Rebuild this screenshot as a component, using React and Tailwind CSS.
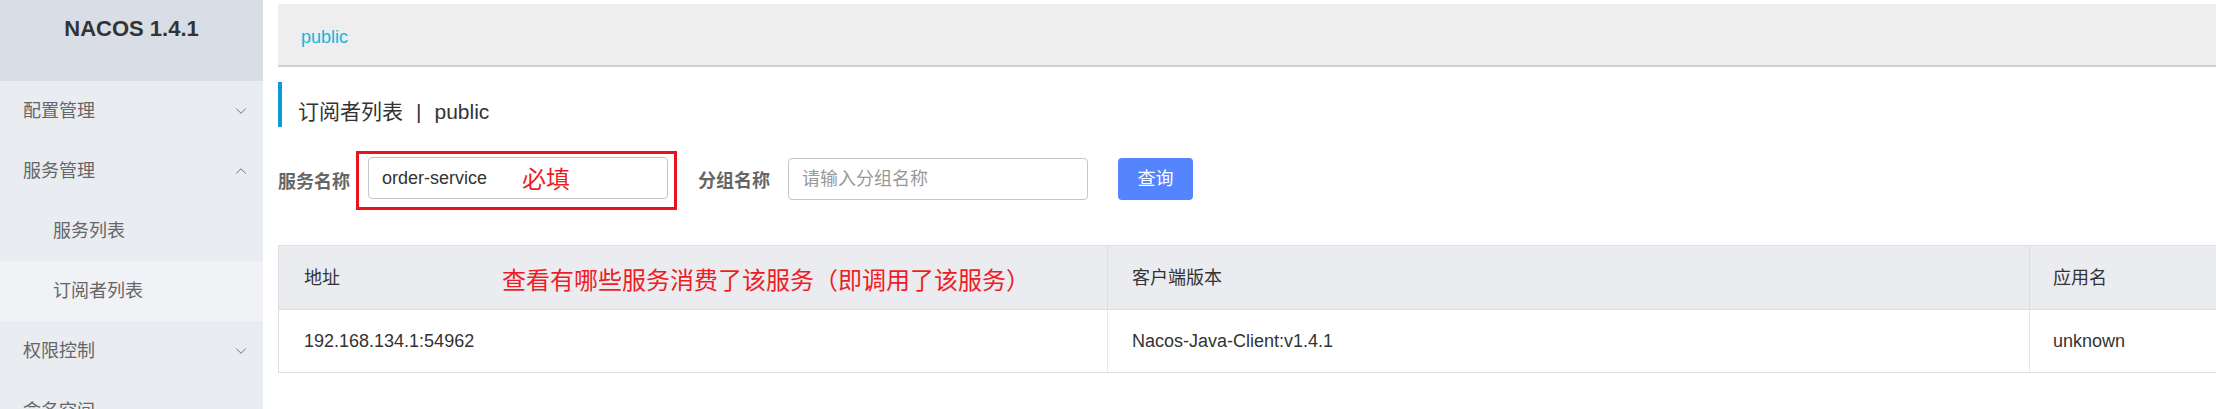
import { ChevronDown, ChevronUp } from 'lucide-react'

const font = { fontFamily: '"Liberation Sans", "Noto Sans CJK SC", sans-serif' }

function MenuItem({ label, sub, open, active, arrow }) {
  return (
    <div
      className={`h-[60px] shrink-0 flex items-center justify-between pr-[13px] text-[18px] text-[#666] ${sub ? 'pl-[53px]' : 'pl-[23px]'} ${active ? 'bg-[#f0f2f6]' : 'bg-[#e9ecf1]'}`}
    >
      <span className="leading-[20px]">{label}</span>
      {arrow && (open ? <ChevronUp className="size-[18px] text-[#666]" strokeWidth={1.2} /> : <ChevronDown className="size-[18px] text-[#666]" strokeWidth={1.2} />)}
    </div>
  )
}

export default function App() {
  return (
    <div className="flex w-full h-[409px] overflow-hidden bg-white" style={font}>
      <aside className="w-[263px] shrink-0 bg-[#e9ecf1] flex flex-col overflow-hidden">
        <div className="h-[81px] shrink-0 bg-[#d9dee6] pt-[18px] text-center text-[22px] leading-[22px] font-bold text-[#333]">
          NACOS 1.4.1
        </div>
        <MenuItem label="配置管理" arrow />
        <MenuItem label="服务管理" arrow open />
        <MenuItem label="服务列表" sub />
        <MenuItem label="订阅者列表" sub active />
        <MenuItem label="权限控制" arrow />
        <MenuItem label="命名空间" />
      </aside>

      <main className="flex-1 min-w-0 pl-[15px] pt-[4px]">
        <div className="h-[63px] bg-[#eeeeee] border-b-2 border-[#d0d0d0] flex items-center pl-[23px] pt-[4px]">
          <span className="text-[18px] leading-[20px] text-[#11b7dd]">public</span>
        </div>

        <div className="flex items-start mt-[15px]">
          <div className="w-[4px] h-[45px] bg-[#0f9ad3]" />
          <div className="pl-[16px] pt-[20px] text-[21px] leading-[20px] text-[#333] flex">
            <span>订阅者列表</span>
            <span className="mx-[13px]">|</span>
            <span>public</span>
          </div>
        </div>

        <div className="flex items-center mt-[24px] h-[59px]">
          <span className="text-[18px] font-bold text-[#666] w-[78px] leading-[20px] pt-[2px]">服务名称</span>
          <div className="h-[59px] w-[321px] border-[3px] border-[#e8141d] pl-[9px] pt-[3px]">
            <div className="w-[300px] h-[42px] border border-[#c4c6cf] rounded-[4px] flex items-center pl-[13px] bg-white">
              <span className="text-[18px] leading-[20px] text-[#333]">order-service</span>
              <span className="ml-[35px] text-[24px] leading-[24px] text-[#ee1c25] pt-[4px]">必填</span>
            </div>
          </div>
          <span className="ml-[21px] text-[18px] font-bold text-[#666] w-[90px] leading-[20px]">分组名称</span>
          <div className="w-[300px] h-[42px] border border-[#c4c6cf] rounded-[4px] flex items-center pl-[13px] -mt-[4px]">
            <span className="text-[18px] leading-[20px] text-[#999]">请输入分组名称</span>
          </div>
          <button className="ml-[30px] w-[75px] h-[42px] -mt-[4px] bg-[#5584ff] rounded-[4px] text-white text-[18px] leading-[20px]">
            查询
          </button>
        </div>

        <div className="mt-[35px] border-t border-l border-[#dcdee3] text-[18px] text-[#333]">
          <div className="flex h-[64px] bg-[#ebecf0] border-b border-[#dcdee3]">
            <div className="w-[829px] shrink-0 flex items-center pl-[25px] border-r border-[#dcdee3]">
              <span className="leading-[20px]">地址</span>
              <span className="ml-[162px] text-[24px] leading-[24px] text-[#ee1c25] pt-[6px]">查看有哪些服务消费了该服务（即调用了该服务）</span>
            </div>
            <div className="w-[922px] shrink-0 flex items-center pl-[24px] border-r border-[#dcdee3]">
              <span className="leading-[20px]">客户端版本</span>
            </div>
            <div className="flex-1 flex items-center pl-[23px]">
              <span className="leading-[20px]">应用名</span>
            </div>
          </div>
          <div className="flex h-[63px] border-b border-[#dcdee3]">
            <div className="w-[829px] shrink-0 flex items-center pl-[25px] border-r border-[#e6e7eb]">
              <span className="leading-[20px]">192.168.134.1:54962</span>
            </div>
            <div className="w-[922px] shrink-0 flex items-center pl-[24px] border-r border-[#e6e7eb]">
              <span className="leading-[20px]">Nacos-Java-Client:v1.4.1</span>
            </div>
            <div className="flex-1 flex items-center pl-[23px]">
              <span className="leading-[20px]">unknown</span>
            </div>
          </div>
        </div>
      </main>
    </div>
  )
}
